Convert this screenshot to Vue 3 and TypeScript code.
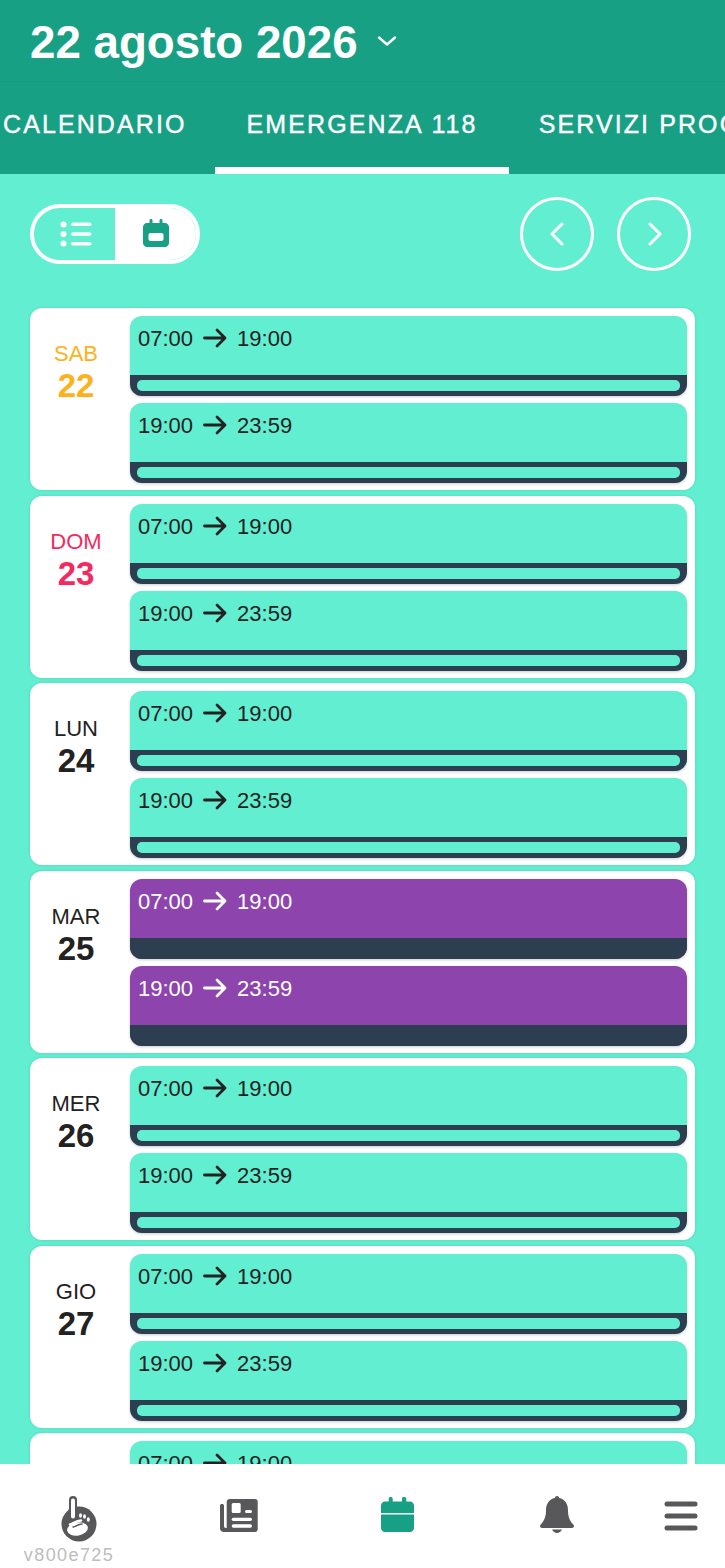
<script setup lang="ts">
interface Day {
  label: string;
  num: number;
  tone: string;
  booked: boolean;
}

const days: Day[] = [
  { label: "SAB", num: 22, tone: "sat", booked: false },
  { label: "DOM", num: 23, tone: "sun", booked: false },
  { label: "LUN", num: 24, tone: "", booked: false },
  { label: "MAR", num: 25, tone: "", booked: true },
  { label: "MER", num: 26, tone: "", booked: false },
  { label: "GIO", num: 27, tone: "", booked: false },
  { label: "VEN", num: 28, tone: "", booked: false },
];

const slots = [
  { from: "07:00", to: "19:00" },
  { from: "19:00", to: "23:59" },
];
</script>

<template>
  <div class="page">
    <header class="top">
      <span class="title">22 agosto 2026</span>
      <svg class="caret" width="20" height="10" viewBox="0 0 20 10">
        <path d="M2 1.500l8 7 8-7" fill="none" stroke="#fff" stroke-width="2.400" stroke-linecap="round" stroke-linejoin="round" />
      </svg>
    </header>

    <nav class="tabs">
      <span class="tab">CALENDARIO</span>
      <span class="tab active">EMERGENZA 118</span>
      <span class="tab">SERVIZI PROGRAMMATI</span>
    </nav>

    <main class="content">
      <div class="toolbar">
        <div class="toggle">
          <span class="toggle-half">
            <svg width="32" height="26" viewBox="0 0 32 26">
              <g fill="#fff">
                <circle cx="3.500" cy="3.500" r="3" />
                <circle cx="3.500" cy="13" r="3" />
                <circle cx="3.500" cy="22.500" r="3" />
                <rect x="11" y="1.500" width="20.500" height="3.600" rx="1.800" />
                <rect x="11" y="11.200" width="20.500" height="3.600" rx="1.800" />
                <rect x="11" y="20.900" width="20.500" height="3.600" rx="1.800" />
              </g>
            </svg>
          </span>
          <span class="toggle-half on">
            <svg width="26" height="28" viewBox="0 0 26 28">
              <path fill="#18a085" fill-rule="evenodd" d="M8 0c.9 0 1.500.6 1.500 1.400V4h7V1.400C16.500.6 17.100 0 18 0s1.500.6 1.500 1.400V4H22c2.200 0 4 1.800 4 4v16c0 2.200-1.800 4-4 4H4c-2.200 0-4-1.800-4-4V8c0-2.200 1.800-4 4-4h2.500V1.400C6.500.6 7.100 0 8 0zM7.500 14C6.400 14 5.500 14.900 5.500 16v4c0 1.100.9 2 2 2h11c1.100 0 2-.9 2-2v-4c0-1.100-.9-2-2-2z" />
            </svg>
          </span>
        </div>
        <div class="pager">
          <button class="round">
            <svg width="16" height="24" viewBox="0 0 16 24">
              <path d="M13 2L3 12l10 10" fill="none" stroke="#fff" stroke-width="3" stroke-linecap="round" stroke-linejoin="round" />
            </svg>
          </button>
          <button class="round">
            <svg class="next" width="16" height="24" viewBox="0 0 16 24">
              <path d="M3 2l10 10L3 22" fill="none" stroke="#fff" stroke-width="3" stroke-linecap="round" stroke-linejoin="round" />
            </svg>
          </button>
        </div>
      </div>

      <div class="days">
        <section v-for="d in days" :key="d.num" class="day">
          <div class="date" :class="d.tone">
            <span class="dow">{{ d.label }}</span>
            <span class="num">{{ d.num }}</span>
          </div>
          <div class="slots">
            <div v-for="s in slots" :key="s.from" class="slot" :class="{ booked: d.booked }">
              <div class="hours">
                <span>{{ s.from }}</span>
                <svg class="arrow" width="24" height="20" viewBox="0 0 24 20">
                  <path d="M1.500 10h20.500M14 2l8 8-8 8" fill="none" stroke="currentColor" stroke-width="2.800" stroke-linecap="round" stroke-linejoin="round" />
                </svg>
                <span>{{ s.to }}</span>
              </div>
              <div class="strip"><i class="strip-in"></i></div>
            </div>
          </div>
        </section>
      </div>
    </main>

    <footer class="bottom">
      <div class="cell first">
        <svg width="40" height="46" viewBox="0 0 40 46">
          <circle cx="20" cy="28" r="17.500" fill="#58585a" />
          <rect x="10" y="0" width="8" height="30" rx="4" fill="#58585a" />
          <rect x="12" y="2.500" width="4" height="20" rx="2" fill="#fff" />
          <ellipse cx="18.500" cy="33" rx="10.500" ry="6.500" transform="rotate(-10 18.500 33)" fill="#fff" />
          <path d="M11 28.500c3.500-.5 5.500-4 11-4" fill="none" stroke="#fff" stroke-width="2.600" stroke-linecap="round" />
          <path d="M14 31c3.200-.3 4.800-3 9-3" fill="none" stroke="#58585a" stroke-width="1.500" stroke-linecap="round" />
          <g fill="#fff">
            <ellipse cx="21.500" cy="19.500" rx="1.500" ry="2.300" />
            <ellipse cx="25.500" cy="20.500" rx="1.500" ry="2.300" />
            <ellipse cx="29.300" cy="23.500" rx="1.500" ry="2.300" />
          </g>
        </svg>
        <span class="version">v800e725</span>
      </div>
      <div class="cell news">
        <svg width="38" height="33" viewBox="0 0 38 33">
          <path fill="#58585a" d="M0 6.500C0 5.700.7 5 2 5s2 .7 2 1.500V27c0 1.200.6 2 2 2h4v4H4c-2.500 0-4-1.500-4-4z" />
          <path fill="#58585a" d="M9.700 0H35c1.600 0 2.700 1.100 2.700 2.700v27.600c0 1.600-1.100 2.700-2.700 2.700H6.700V3c0-1.700 1.300-3 3-3z" />
          <g fill="#fff">
            <rect x="11.700" y="4" width="9" height="10" rx="1.500" />
            <rect x="25" y="11" width="7" height="3" rx="1.500" />
            <rect x="11.700" y="18.700" width="20.300" height="3.200" rx="1.600" />
            <rect x="11.700" y="25.300" width="20.300" height="3.400" rx="1.700" />
          </g>
        </svg>
      </div>
      <div class="cell cal">
        <svg width="33" height="35" viewBox="0 0 33 35">
          <path fill="#18a085" d="M9.700 0c1.100 0 2 .7 2 1.700v2.800h9.300V1.700c0-1 .9-1.700 2.100-1.700s2.200.7 2.200 1.700v2.800H29c2.200 0 4 1.800 4 4V16H0V8.500c0-2.200 1.800-4 4-4h3.700V1.700C7.700.7 8.600 0 9.700 0zM0 17.500h33V31c0 2.200-1.800 4-4 4H4c-2.200 0-4-1.800-4-4z" />
        </svg>
      </div>
      <div class="cell">
        <svg width="34" height="37" viewBox="0 0 34 37">
          <path fill="#58585a" d="M17 0c1.200 0 2 .8 2.100 2C25 3.200 28 8 28 14c0 7 1.800 10.500 4.800 14 .6.700 1.200 1.300 1.200 2 0 1.200-1 2-2 2H2c-1 0-2-.8-2-2 0-.7.600-1.300 1.200-2C4.200 24.500 6 21 6 14 6 8 9 3.200 14.900 2 15 .8 15.800 0 17 0zM12 33.500h10c-1 2-3 3.500-5 3.500s-4-1.500-5-3.500z" />
        </svg>
      </div>
      <div class="cell menu">
        <svg width="34" height="30" viewBox="0 0 34 30">
          <g fill="#58585a">
            <rect x="0.500" y="0.500" width="33" height="5" rx="2.500" />
            <rect x="0.500" y="12.500" width="33" height="5" rx="2.500" />
            <rect x="0.500" y="24.500" width="33" height="5" rx="2.500" />
          </g>
        </svg>
      </div>
    </footer>
  </div>
</template>

<style scoped>
.page {
  width: 725px;
  height: 1568px;
  display: flex;
  flex-direction: column;
  overflow: hidden;
  font-family: "Liberation Sans", Arial, sans-serif;
  background: #62eed0;
  color: #222;
}

.top {
  height: 82px;
  flex: none;
  box-sizing: border-box;
  padding: 4px 0 0 30px;
  display: flex;
  align-items: center;
  gap: 19px;
  background: #18a085;
  border-bottom: 1px solid #169a80;
}

.title {
  color: #fff;
  font-size: 45.700px;
  font-weight: 700;
}

.caret {
  margin-top: -3px;
}

.tabs {
  height: 92px;
  flex: none;
  display: flex;
  margin-left: -27px;
  width: 900px;
  background: #18a085;
}

.tab {
  box-sizing: border-box;
  height: 92px;
  padding: 24px 30px 0;
  color: #fff;
  font-size: 25px;
  line-height: 36px;
  letter-spacing: 2.100px;
  -webkit-text-stroke: 0.400px #fff;
  white-space: nowrap;
}

.tab.active {
  margin-left: -1.500px;
  padding-left: 31.500px;
  padding-right: 31px;
  border-bottom: 7px solid #fff;
}

.content {
  flex: 1;
  min-height: 0;
  overflow: hidden;
  padding: 23px 30px 0;
}

.toolbar {
  height: 74px;
  display: flex;
  align-items: center;
  justify-content: space-between;
  padding-right: 4px;
}

.toggle {
  width: 170px;
  height: 60px;
  box-sizing: border-box;
  border: 4px solid #fff;
  border-radius: 30px;
  overflow: hidden;
  display: flex;
}

.toggle-half {
  width: 81px;
  display: flex;
  align-items: center;
  justify-content: center;
  padding-left: 2px;
  box-sizing: border-box;
}

.toggle-half.on {
  flex: 1;
  background: #fff;
  padding: 0 0 2px 1px;
}

.pager {
  display: flex;
  gap: 23px;
}

.round {
  width: 74px;
  height: 74px;
  box-sizing: border-box;
  padding: 0;
  border: 3.500px solid #fff;
  border-radius: 50%;
  background: transparent;
  display: flex;
  align-items: center;
  justify-content: center;
}

.next {
  margin-left: 2px;
}

.days {
  margin-top: 37px;
  display: flex;
  flex-direction: column;
  gap: 5.500px;
}

.day {
  height: 182px;
  flex: none;
  box-sizing: border-box;
  padding: 8px 8px 7px 0;
  display: flex;
  gap: 8px;
  background: #fff;
  border-radius: 12px;
  box-shadow: 0 0 3px rgba(0, 0, 0, 0.12);
}

.date {
  width: 92px;
  flex: none;
  padding-top: 25px;
  display: flex;
  flex-direction: column;
  align-items: center;
}

.date.sat {
  color: #fdb21c;
}

.date.sun {
  color: #f22a60;
}

.dow {
  font-size: 22px;
  line-height: 26px;
}

.num {
  font-size: 33px;
  font-weight: 700;
  line-height: 37px;
}

.slots {
  flex: 1;
  display: flex;
  flex-direction: column;
  gap: 7px;
}

.slot {
  height: 80px;
  display: flex;
  flex-direction: column;
  border-radius: 12px;
  overflow: hidden;
  background: #62eed0;
  box-shadow: 0 1px 3px rgba(0, 0, 0, 0.2);
}

.slot.booked {
  background: #8e44ad;
  color: #fff;
}

.hours {
  flex: 1;
  padding: 9px 8px 0;
  display: flex;
  align-items: flex-start;
  gap: 10px;
  font-size: 22px;
  line-height: 28px;
}

.arrow {
  margin-top: 3px;
}

.strip {
  height: 21px;
  box-sizing: border-box;
  padding: 5px 7px;
  background: #2c3e50;
}

.strip-in {
  display: block;
  height: 100%;
  border-radius: 5px;
  background: #62eed0;
}

.booked .strip-in {
  display: none;
}

.bottom {
  height: 104px;
  flex: none;
  display: grid;
  grid-template-columns: 158px 161px 157px 161px 88px;
  background: #fff;
}

.cell {
  display: flex;
  justify-content: center;
  padding-top: 32px;
}

.cell.first {
  flex-direction: column;
  align-items: center;
  padding-top: 29px;
}

.cell.news {
  padding-top: 35px;
}

.cell.cal {
  padding-top: 33px;
}

.cell.menu {
  padding-top: 37px;
}

.version {
  margin-top: 3px;
  margin-right: 20px;
  color: #bdbdbd;
  font-size: 18px;
  line-height: 20px;
  letter-spacing: 1.400px;
}
</style>

<style>
html,
body {
  margin: 0;
  background: #fff;
}
</style>
